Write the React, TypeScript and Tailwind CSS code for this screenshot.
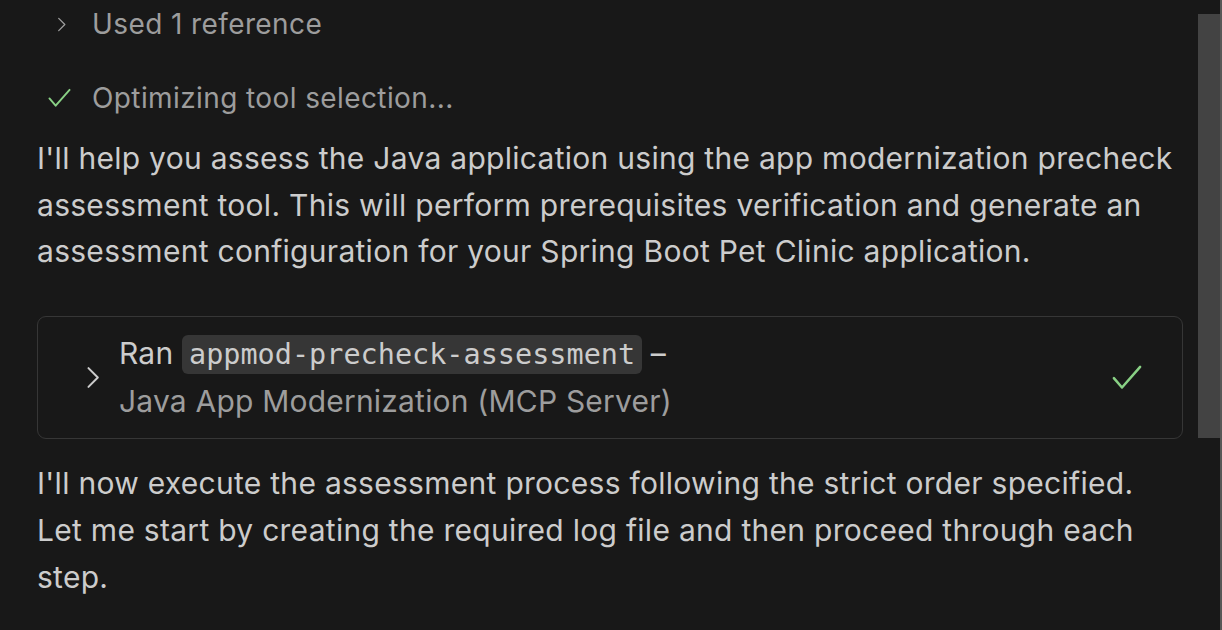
import React from "react";

const Chevron = ({ className }: { className?: string }) => (
  <svg viewBox="0 0 10 16" className={className} fill="none" stroke="currentColor" strokeWidth="1.4" strokeLinecap="round" strokeLinejoin="round">
    <path d="M1.5 1.5 L8 8 L1.5 14.5" />
  </svg>
);

const Check = ({ className }: { className?: string }) => (
  <svg viewBox="0 0 24 20" className={className} fill="none" stroke="currentColor" strokeWidth="2" strokeLinecap="round" strokeLinejoin="round">
    <path d="M1.5 10.5 L8 18 L22.5 1.5" />
  </svg>
);

export default function App() {
  return (
    <div
      className="relative w-[1222px] h-[630px] overflow-hidden bg-[#181818] text-[#cccccc]"
      style={{ fontFamily: "Inter, 'Noto Sans', sans-serif" }}
    >
      <div className="flex flex-col pl-[37px] pr-[39px]">
        <div className="flex h-[48px] items-center text-[28px] tracking-[0.4px] text-[#9d9d9d]">
          <div className="flex w-[55px] justify-start">
            <Chevron className="ml-[20px] h-[15px] w-[10px] text-[#9d9d9d]" />
          </div>
          <span>Used 1 reference</span>
        </div>
        <div className="mt-[26px] flex h-[48px] items-center text-[28px] tracking-[0.4px] text-[#9d9d9d]">
          <div className="flex w-[55px] justify-start">
            <Check className="ml-[11px] h-[20px] w-[23px] text-[#89d185]" />
          </div>
          <span>Optimizing tool selection...</span>
        </div>
        <p className="mt-[13px] pr-[5px] text-[30px] leading-[46.5px] tracking-[0.28px]">
          I'll help you assess the Java application using the app modernization precheck assessment tool. This will
          perform prerequisites verification and generate an assessment configuration for your Spring Boot Pet Clinic
          application.
        </p>
        <div className="mt-[41px] flex h-[123px] items-center rounded-[9px] border border-[#363636] pr-[40px]">
          <div className="flex w-[81px] justify-center">
            <Chevron className="ml-[29px] h-[23px] w-[15px] text-[#cccccc]" />
          </div>
          <div className="flex-1 text-[30px] leading-[47px] tracking-[0.2px] text-[#cccccc]">
            <div>
              Ran{" "}
              <span
                className="rounded-[6px] bg-[#363636] px-[7px] py-[3px] text-[28.5px] tracking-normal text-[#cccccc]"
                style={{ fontFamily: "'DejaVu Sans Mono', 'Liberation Mono', monospace" }}
              >
                appmod-precheck-assessment
              </span>{" "}
              –
            </div>
            <div className="text-[#9d9d9d]">Java App Modernization (MCP Server)</div>
          </div>
          <Check className="h-[27px] w-[30px] text-[#89d185]" />
        </div>
        <p className="mt-[21px] pr-[5px] text-[30px] leading-[47px] tracking-[0.28px]">
          I'll now execute the assessment process following the strict order specified. Let me start by creating the
          required log file and then proceed through each step.
        </p>
      </div>
      <div className="absolute right-[2px] top-[14px] h-[424px] w-[22px] bg-[#434343]" />
      <div className="absolute right-0 top-0 h-full w-[2px] bg-[#575757]" />
    </div>
  );
}
